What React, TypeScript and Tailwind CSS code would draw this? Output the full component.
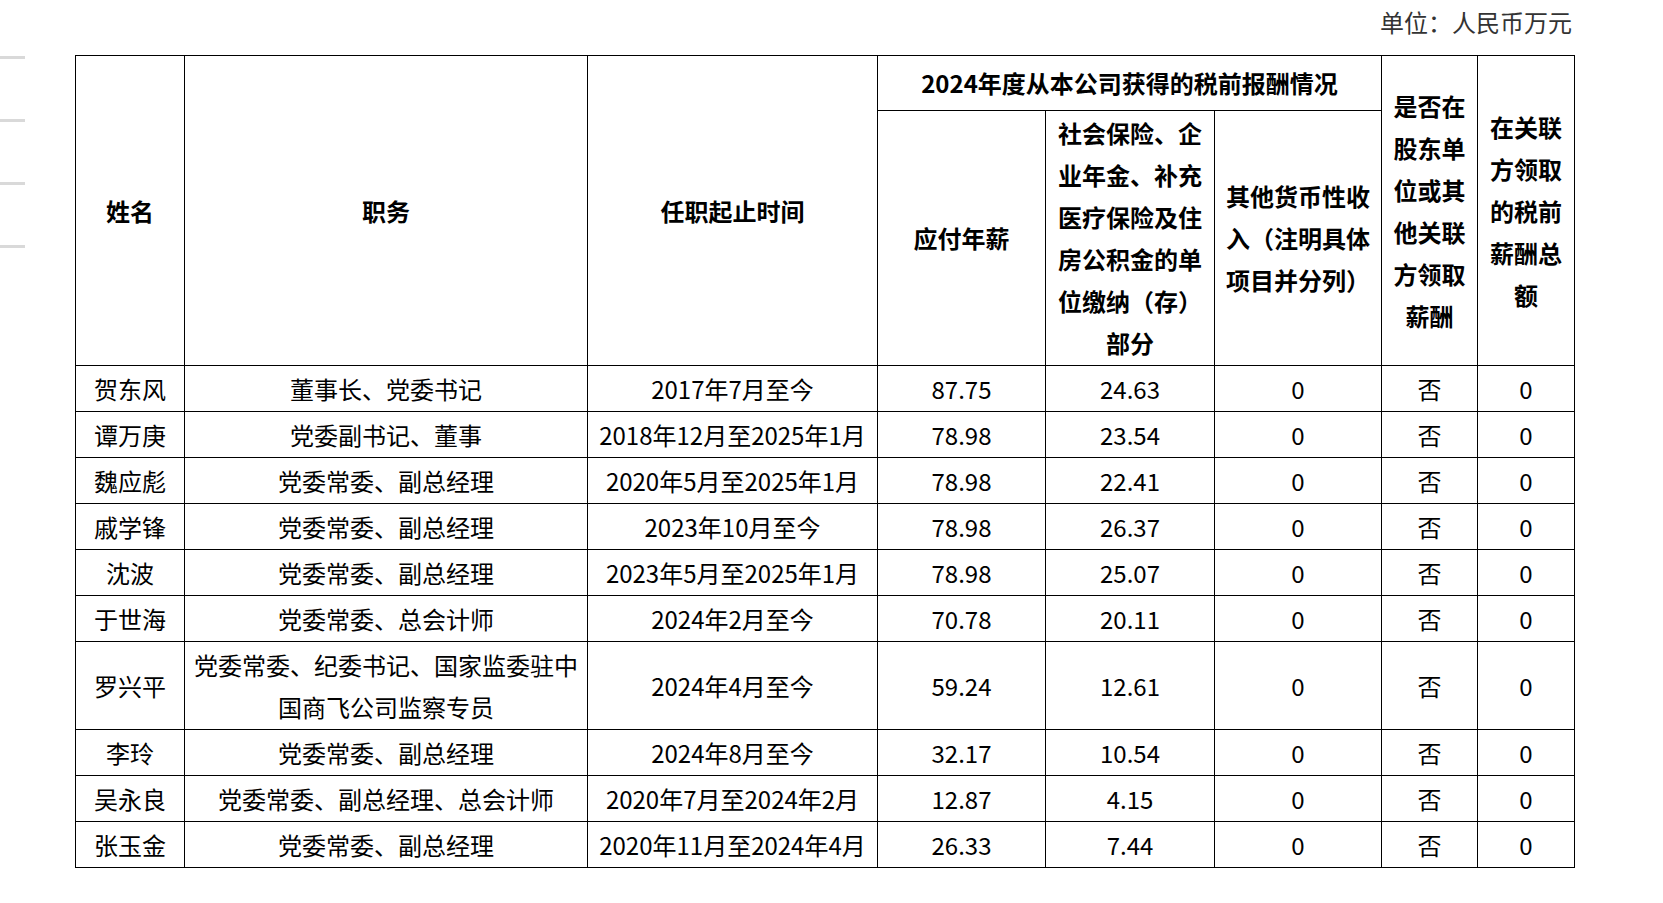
import type { ReactNode } from 'react';

type Row = {
  name: string;
  post: ReactNode;
  term: string;
  salary: string;
  social: string;
  tall?: boolean;
};

const rows: Row[] = [
  { name: '贺东风', post: '董事长、党委书记', term: '2017年7月至今', salary: '87.75', social: '24.63' },
  { name: '谭万庚', post: '党委副书记、董事', term: '2018年12月至2025年1月', salary: '78.98', social: '23.54' },
  { name: '魏应彪', post: '党委常委、副总经理', term: '2020年5月至2025年1月', salary: '78.98', social: '22.41' },
  { name: '戚学锋', post: '党委常委、副总经理', term: '2023年10月至今', salary: '78.98', social: '26.37' },
  { name: '沈波', post: '党委常委、副总经理', term: '2023年5月至2025年1月', salary: '78.98', social: '25.07' },
  { name: '于世海', post: '党委常委、总会计师', term: '2024年2月至今', salary: '70.78', social: '20.11' },
  {
    name: '罗兴平',
    post: (
      <>
        党委常委、纪委书记、国家监委驻中
        <br />
        国商飞公司监察专员
      </>
    ),
    term: '2024年4月至今',
    salary: '59.24',
    social: '12.61',
    tall: true,
  },
  { name: '李玲', post: '党委常委、副总经理', term: '2024年8月至今', salary: '32.17', social: '10.54' },
  { name: '吴永良', post: '党委常委、副总经理、总会计师', term: '2020年7月至2024年2月', salary: '12.87', social: '4.15' },
  { name: '张玉金', post: '党委常委、副总经理', term: '2020年11月至2024年4月', salary: '26.33', social: '7.44' },
];

// 多行表头：按原表手动断行
function Lines({ lines }: { lines: string[] }) {
  return (
    <div className="flex flex-col items-center">
      {lines.map((l) => (
        <span key={l} className="whitespace-nowrap">
          {l}
        </span>
      ))}
    </div>
  );
}

const th = 'border border-black p-0 text-center align-middle font-bold';
const td = 'border border-black p-0 text-center align-middle whitespace-nowrap';

export default function App() {
  return (
    <div className="flex h-[903px] w-full bg-white font-['Noto_Sans_CJK_SC','Liberation_Sans',sans-serif] text-[24px] text-black">
      {/* 左侧灰色刻度 */}
      <div className="flex w-[75px] shrink-0 flex-col gap-[60px] pt-[56px]">
        <div className="h-[3px] w-[25px] bg-[#d9d9d9]" />
        <div className="h-[3px] w-[25px] bg-[#d9d9d9]" />
        <div className="h-[3px] w-[25px] bg-[#d9d9d9]" />
        <div className="h-[3px] w-[25px] bg-[#d9d9d9]" />
      </div>

      <div className="w-[1499px]">
        <div className="flex h-[55px] items-start justify-end pr-[2px] pt-[6px]">
          <span className="text-[24px] leading-[32px] text-[#333]">单位：人民币万元</span>
        </div>

        <table className="w-[1499px] table-fixed border-collapse leading-[42px]">
          <colgroup>
            <col className="w-[109px]" />
            <col className="w-[403px]" />
            <col className="w-[290px]" />
            <col className="w-[168px]" />
            <col className="w-[169px]" />
            <col className="w-[167px]" />
            <col className="w-[96px]" />
            <col className="w-[97px]" />
          </colgroup>
          <thead>
            <tr className="h-[55px]">
              <th rowSpan={2} className={th}>姓名</th>
              <th rowSpan={2} className={th}>职务</th>
              <th rowSpan={2} className={th}>任职起止时间</th>
              <th colSpan={3} className={th}>2024年度从本公司获得的税前报酬情况</th>
              <th rowSpan={2} className={th}>
                <Lines lines={['是否在', '股东单', '位或其', '他关联', '方领取', '薪酬']} />
              </th>
              <th rowSpan={2} className={th}>
                <Lines lines={['在关联', '方领取', '的税前', '薪酬总', '额']} />
              </th>
            </tr>
            <tr className="h-[255px]">
              <th className={th}>应付年薪</th>
              <th className={th}>
                <Lines lines={['社会保险、企', '业年金、补充', '医疗保险及住', '房公积金的单', '位缴纳（存）', '部分']} />
              </th>
              <th className={th}>
                <Lines lines={['其他货币性收', '入（注明具体', '项目并分列）']} />
              </th>
            </tr>
          </thead>
          <tbody>
            {rows.map((r) => (
              <tr key={r.name} className={r.tall ? 'h-[88px]' : 'h-[46px]'}>
                <td className={td}>{r.name}</td>
                <td className={td}>{r.post}</td>
                <td className={td}>{r.term}</td>
                <td className={td}>{r.salary}</td>
                <td className={td}>{r.social}</td>
                <td className={td}>0</td>
                <td className={td}>否</td>
                <td className={td}>0</td>
              </tr>
            ))}
          </tbody>
        </table>
      </div>
    </div>
  );
}
